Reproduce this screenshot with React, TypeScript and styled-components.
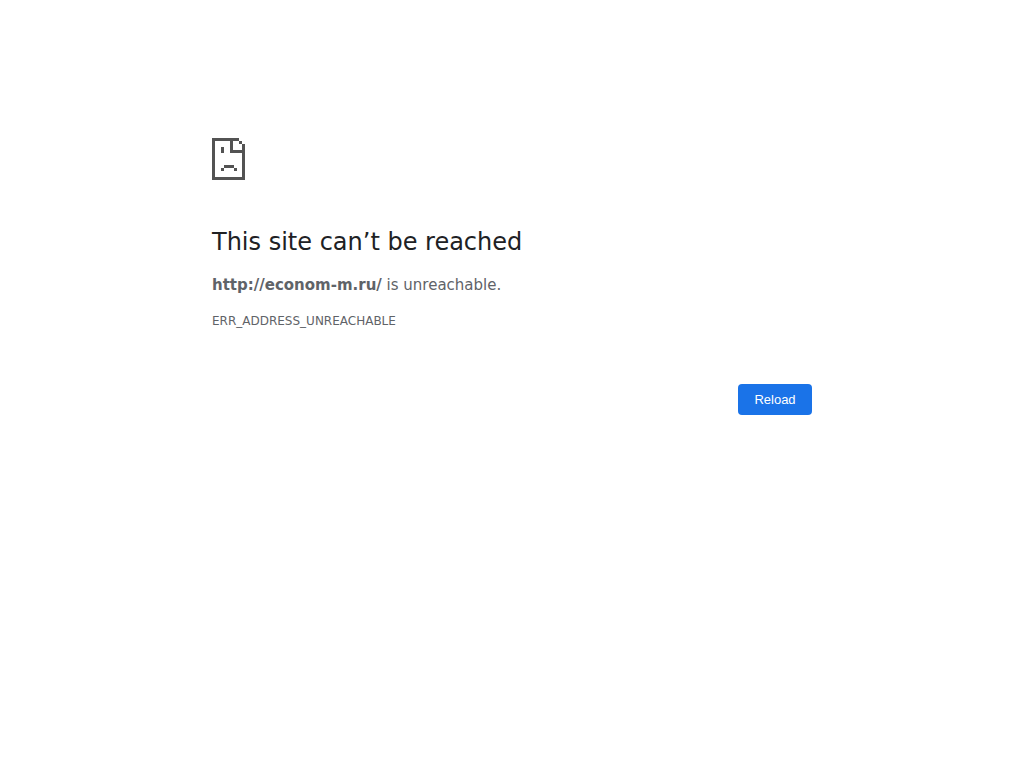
import React from "react";
import styled, { createGlobalStyle } from "styled-components";

const GlobalStyle = createGlobalStyle`
  body {
    margin: 0;
    background: #fff;
    color: #5f6368;
    font-family: "DejaVu Sans", sans-serif;
    font-size: 15px;
    line-height: 24px;
  }
`;

const Page = styled.main`
  box-sizing: border-box;
  max-width: 648px;
  margin: 0 auto;
  padding: 138px 24px 24px;
`;

const SadPage = styled.svg`
  display: block;
  width: 33px;
  height: 42px;
  margin-bottom: 48px;
  fill: #535353;
`;

const Title = styled.h1`
  margin: 0 0 17px;
  color: #202124;
  font-size: 24px;
  font-weight: 400;
  line-height: 28px;
`;

const Summary = styled.p`
  margin: 0 0 12px;
`;

const ErrorCode = styled.p`
  margin: 0;
  font-size: 12px;
`;

const Actions = styled.div`
  display: flex;
  justify-content: flex-end;
  margin-top: 51px;
`;

const ReloadButton = styled.button`
  min-width: 74px;
  padding: 8px 16px;
  border: 0;
  border-radius: 4px;
  background: #1a73e8;
  color: #fff;
  cursor: pointer;
  font-family: "Liberation Sans", Arial, sans-serif;
  font-size: 13px;
  line-height: 15px;
`;

export default function App() {
  return (
    <>
      <GlobalStyle />
      <Page>
        <SadPage viewBox="0 0 33 42" shapeRendering="crispEdges" aria-hidden="true">
          <path d="M0 0h27v3h-6v9h9V6h3v36H0zM3 3v36h27V15H18V3z" fillRule="evenodd" />
          <path d="M27 3h3v3h-3zM9 9h3v6H9zM12 27h10v3H12zM9 30h3v3H9zM22 30h3v3h-3z" />
        </SadPage>
        <Title>This site can’t be reached</Title>
        <Summary>
          <strong>http://econom-m.ru/</strong> is unreachable.
        </Summary>
        <ErrorCode>ERR_ADDRESS_UNREACHABLE</ErrorCode>
        <Actions>
          <ReloadButton type="button" onClick={() => window.location.reload()}>
            Reload
          </ReloadButton>
        </Actions>
      </Page>
    </>
  );
}
